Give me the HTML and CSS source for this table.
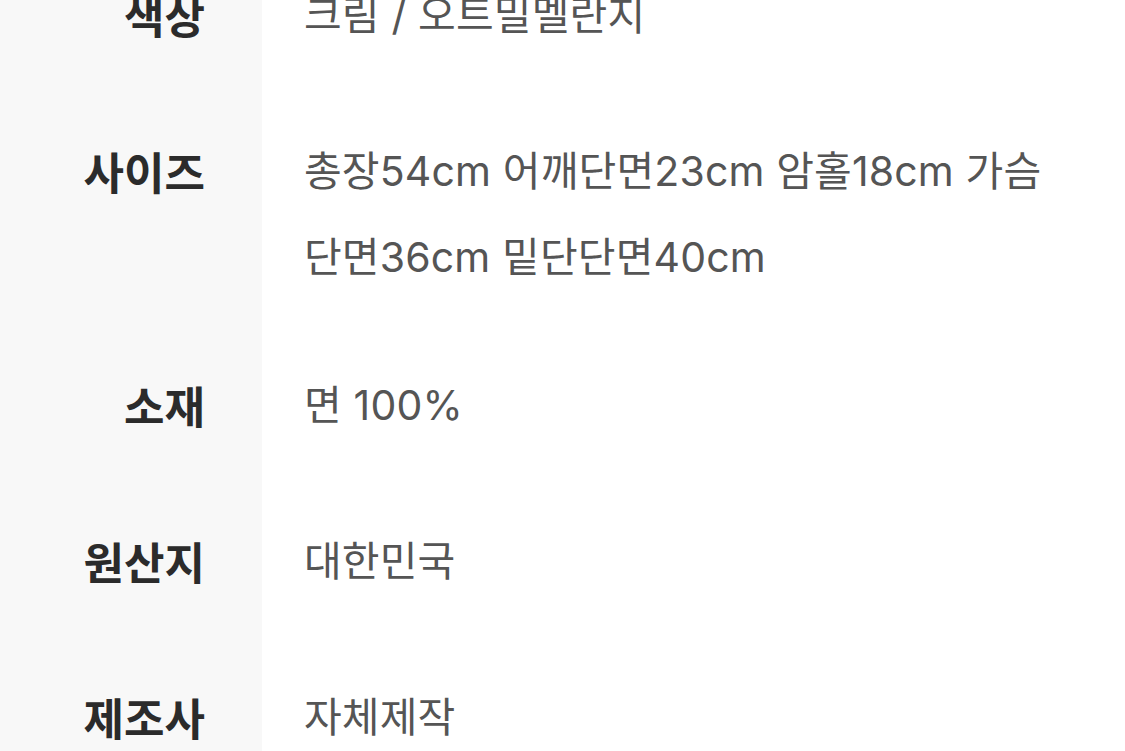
FILE: index.html
```html
<!DOCTYPE html>
<html lang="ko">
<head>
<meta charset="utf-8">
<link rel="stylesheet" href="styles.css">
</head>
<body>
<div class="spec">
  <div class="row">
    <div class="label">색상</div>
    <div class="value">크림 / 오트밀멜란지</div>
  </div>
  <div class="row row-multi">
    <div class="label">사이즈</div>
    <div class="value">총장54cm 어깨단면23cm 암홀18cm 가슴<br>단면36cm 밑단단면40cm</div>
  </div>
  <div class="row">
    <div class="label">소재</div>
    <div class="value">면 100%</div>
  </div>
  <div class="row">
    <div class="label">원산지</div>
    <div class="value">대한민국</div>
  </div>
  <div class="row">
    <div class="label">제조사</div>
    <div class="value">자체제작</div>
  </div>
</div>
</body>
</html>
```

FILE: styles.css
```css
html, body {
  margin: 0;
  padding: 0;
  background: #ffffff;
  overflow: hidden;
}
body {
  font-family: "Inter", "Noto Sans CJK KR", sans-serif;
  width: 1125px;
  height: 751px;
  background: linear-gradient(to right, #f8f8f8 0, #f8f8f8 262px, #ffffff 262px);
}
.spec {
  margin-top: -63px;
  display: flex;
  flex-direction: column;
}
.row {
  display: flex;
  align-items: flex-start;
  padding: 35px 0;
}
.row-multi {
  padding-bottom: 27px;
}
.label {
  width: 205px;
  flex: 0 0 205px;
  text-align: right;
  font-family: "Noto Sans CJK KR", sans-serif;
  font-weight: 700;
  font-size: 44px;
  line-height: 86px;
  color: #2b2b2b;
}
.value {
  margin-left: 99px;
  font-size: 41px;
  line-height: 86px;
  color: #555555;
  white-space: nowrap;
  letter-spacing: 0.15px;
}
```
